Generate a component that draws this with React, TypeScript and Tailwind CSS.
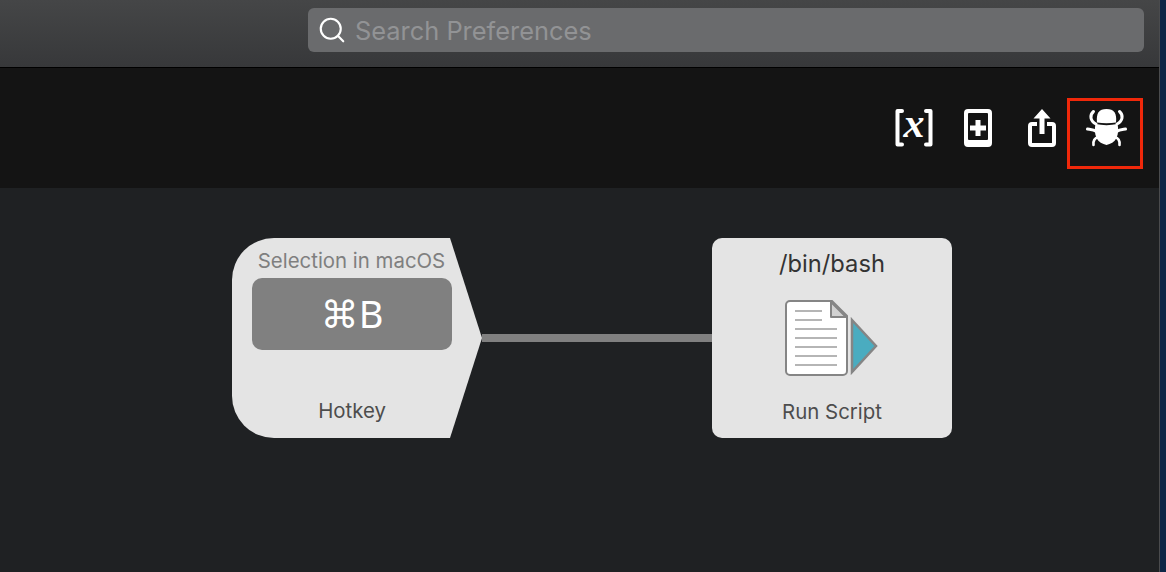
import { Search } from 'lucide-react';

const sans = "font-['Inter','Noto_Sans',sans-serif]";

function VariablesIcon() {
  return (
    <div className="relative w-[38px] h-[38px] shrink-0 flex items-center justify-center">
      <svg width="38" height="38" viewBox="0 0 38 38" fill="none" className="absolute inset-0">
        <path d="M7 2H2.500v33.500H7" stroke="#fff" strokeWidth="4" strokeLinejoin="round" strokeLinecap="round" />
        <path d="M31 2h4.500v33.500H31" stroke="#fff" strokeWidth="4" strokeLinejoin="round" strokeLinecap="round" />
      </svg>
      <span className="relative text-white italic font-bold text-[42px] leading-none -mt-[10px] font-['Liberation_Serif',serif]">x</span>
    </div>
  );
}

function NoteIcon() {
  return (
    <svg width="28" height="38" viewBox="0 0 28 38" className="shrink-0">
      <path
        fillRule="evenodd"
        d="M4 0h20a4 4 0 0 1 4 4v30a4 4 0 0 1-4 4H4a4 4 0 0 1-4-4V4a4 4 0 0 1 4-4zM5 4a1 1 0 0 0-1 1v25a1 1 0 0 0 1 1h18a1 1 0 0 0 1-1V5a1 1 0 0 0-1-1z"
        fill="#fff"
      />
      <path d="M11.500 11h5v5.500H22v5h-5.500V27h-5v-5.500H6v-5h5.500z" fill="#fff" />
    </svg>
  );
}

function ShareIcon() {
  return (
    <svg width="28" height="38" viewBox="0 0 28 38" fill="none" className="shrink-0">
      <path d="M14 0l8.500 9.500H16.500V25h-5V9.500H5.500z" fill="#fff" />
      <path d="M9 15H4a2 2 0 0 0-2 2v17a2 2 0 0 0 2 2h20a2 2 0 0 0 2-2V17a2 2 0 0 0-2-2h-5" stroke="#fff" strokeWidth="4" />
    </svg>
  );
}

function BugIcon() {
  return (
    <svg width="41" height="38" viewBox="0 0 41 38" fill="none" className="shrink-0">
      <path d="M11 13.500C10 4 13 0 20.500 0S31 4 30 13.500c-6 1-13 1-19 0z" fill="#fff" />
      <path d="M9.500 15c7 1.500 15 1.500 22 0 1 5 1 9-1 14-2 4-6 6-10 7-4-1-8-3-10-7-2-5-2-9-1-14z" fill="#fff" />
      <path d="M7.500 2.500C3.500 6 4 12 10 15M33.500 2.500C37.500 6 37 12 31 15" stroke="#fff" strokeWidth="3" strokeLinecap="round" />
      <path d="M1.500 20c3 .500 6 .500 9 2.500M39.500 20c-3 .500-6 .500-9 2.500" stroke="#fff" strokeWidth="3" strokeLinecap="round" />
      <path d="M7.500 36c-.500-4 1-7 5-8M33.500 36c.500-4-1-7-5-8" stroke="#fff" strokeWidth="2.600" strokeLinecap="round" />
    </svg>
  );
}

function ScriptIcon() {
  return (
    <svg width="94" height="76" viewBox="0 0 94 76" fill="none">
      <path d="M5 1h42l15 15v55a4 4 0 0 1-4 4H5a4 4 0 0 1-4-4V5a4 4 0 0 1 4-4z" fill="#fff" stroke="#858585" strokeWidth="2" />
      <path d="M46 2v15h15z" fill="#d2d2d2" stroke="#858585" strokeWidth="2" strokeLinejoin="round" />
      <path d="M10 11h27M10 20h27M10 29h42M10 38h42M10 47h42M10 56h42M10 65h42" stroke="#b5b5b5" strokeWidth="2" />
      <path d="M67 20l24 26-24 26z" fill="#4aacc0" stroke="#858585" strokeWidth="2.500" />
    </svg>
  );
}

export default function App() {
  return (
    <div className={`w-[1166px] h-[572px] flex overflow-hidden bg-[#1f2123] ${sans}`}>
      <div className="w-[1160px] h-full flex flex-col shrink-0 border-r border-[#4a4b4d]">
        {/* Title bar */}
        <div className="h-[68px] shrink-0 pl-[308px] pr-[15px] pt-2 border-b border-black bg-gradient-to-b from-[#454647] to-[#37383a]">
          <div className="h-11 rounded-md bg-[#6a6b6d] flex items-center pl-[9px] gap-[8px]">
            <Search size={30} strokeWidth={1.7} className="text-white shrink-0" />
            <span className="text-[25.400px] leading-none mt-[1px] text-[#929395]">Search Preferences</span>
          </div>
        </div>

        {/* Toolbar */}
        <div className="h-[120px] shrink-0 bg-[#141414] flex items-center justify-end pr-[32px]">
          <div className="flex items-center -mt-[1px]">
            <VariablesIcon />
            <div className="ml-[31px]">
              <NoteIcon />
            </div>
            <div className="ml-[36px]">
              <ShareIcon />
            </div>
            <div className="ml-[30px] relative">
              <BugIcon />
              <div className="absolute -left-[19px] -top-[11px] w-[76px] h-[71px] border-[3px] border-[#f0280a]" />
            </div>
          </div>
        </div>

        {/* Workflow canvas */}
        <div className="flex-1 flex items-start pl-[232px] pt-[50px]">
          <div className="relative w-[250px] h-[200px] shrink-0">
            <svg width="250" height="200" viewBox="0 0 250 200" className="absolute inset-0">
              <path d="M42 0H218L250 100L218 200H42A42 42 0 0 1 0 158V42A42 42 0 0 1 42 0Z" fill="#e4e4e4" />
            </svg>
            <div className="relative flex flex-col items-center w-[240px]">
              <span className="text-[20.400px] leading-[24px] mt-[11px] -ml-[1px] whitespace-nowrap text-[#7f7f7f]">Selection in macOS</span>
              <div className="w-[200px] h-[72px] mt-[5px] rounded-[10px] bg-[#808080] flex items-center justify-center text-white text-[38px] leading-none pb-[3px] font-['Noto_Sans','DejaVu_Sans',sans-serif]">
                ⌘B
              </div>
              <span className="text-[20.400px] leading-[24px] mt-[49px] text-[#4d4d4d]">Hotkey</span>
            </div>
          </div>

          <div className="w-[230px] h-2 mt-[96px] shrink-0 bg-[#808080]" />

          <div className="w-[240px] h-[200px] shrink-0 rounded-[10px] bg-[#e4e4e4] flex flex-col items-center">
            <span className="text-[23.700px] leading-[28px] mt-[12px] text-[#333333]">/bin/bash</span>
            <div className="mt-[22px]">
              <ScriptIcon />
            </div>
            <span className="text-[20.400px] leading-[24px] mt-[24px] text-[#4d4d4d]">Run Script</span>
          </div>
        </div>
      </div>
      <div className="flex-1 bg-[#0d2747]" />
    </div>
  );
}
